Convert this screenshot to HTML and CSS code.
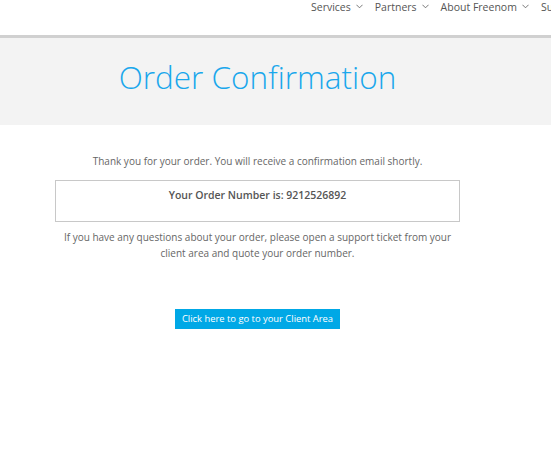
FILE: index.html
```html
<!DOCTYPE html>
<html>
<head>
<meta charset="utf-8">
<link rel="stylesheet" href="styles.css">
</head>
<body>
<header class="topbar">
  <nav class="nav">
    <span class="nav-item">Services <svg class="chev" viewBox="0 0 8 5" width="7" height="5"><path d="M0.5 0.5 L4 4 L7.5 0.5" fill="none" stroke="#666" stroke-width="1"/></svg></span>
    <span class="nav-item">Partners <svg class="chev" viewBox="0 0 8 5" width="7" height="5"><path d="M0.5 0.5 L4 4 L7.5 0.5" fill="none" stroke="#666" stroke-width="1"/></svg></span>
    <span class="nav-item">About Freenom <svg class="chev" viewBox="0 0 8 5" width="7" height="5"><path d="M0.5 0.5 L4 4 L7.5 0.5" fill="none" stroke="#666" stroke-width="1"/></svg></span>
    <span class="nav-item">Support</span>
  </nav>
</header>
<section class="hero">
  <h1 class="title">Order Confirmation</h1>
</section>
<main class="content">
  <p class="lead">Thank you for your order. You will receive a confirmation email shortly.</p>
  <div class="order-box">Your Order Number is: 9212526892</div>
  <p class="note">If you have any questions about your order, please open a support ticket from your client area and quote your order number.</p>
  <a class="btn" href="#">Click here to go to your Client Area</a>
</main>
</body>
</html>
```
FILE: styles.css
```css
html, body { margin: 0; padding: 0; background: #fff; }
body { width: 551px; overflow: hidden; font-family: "Open Sans", sans-serif; }
.topbar { height: 35px; border-bottom: 3px solid #d0d0d0; overflow: hidden; }
.nav { display: flex; white-space: nowrap; padding-left: 311px; gap: 12px; font-size: 10.5px; color: #555; line-height: 14px; }
.nav-item { display: inline-flex; align-items: center; gap: 5px; }
.chev { display: block; margin-top: -2px; }
.hero { background: #f3f3f3; height: 87px; display: flex; }
.title { margin: 0; padding-top: 18px; width: 515px; text-align: center; font-weight: 300; font-size: 31.5px; line-height: 42px; color: #1aa7ec; }
.content { width: 405px; margin-left: 55px; display: flex; flex-direction: column; align-items: center; padding-top: 29px; }
.lead { margin: 0; font-size: 10px; line-height: 15px; color: #666; text-align: center; width: 420px; }
.order-box { box-sizing: border-box; width: 405px; height: 42px; margin-top: 11px; border: 1px solid #c8c8c8; text-align: center; font-weight: 600; font-size: 10.5px; color: #555; padding-top: 7px; line-height: 14px; }
.note { margin: 7px 0 0; font-size: 10px; line-height: 16px; color: #666; text-align: center; width: 405px; }
.btn { margin-top: 48px; display: block; width: 165px; height: 20px; line-height: 20px; background: #00a8e6; color: #fff; text-decoration: none; font-size: 9.4px; text-align: center; }
```
